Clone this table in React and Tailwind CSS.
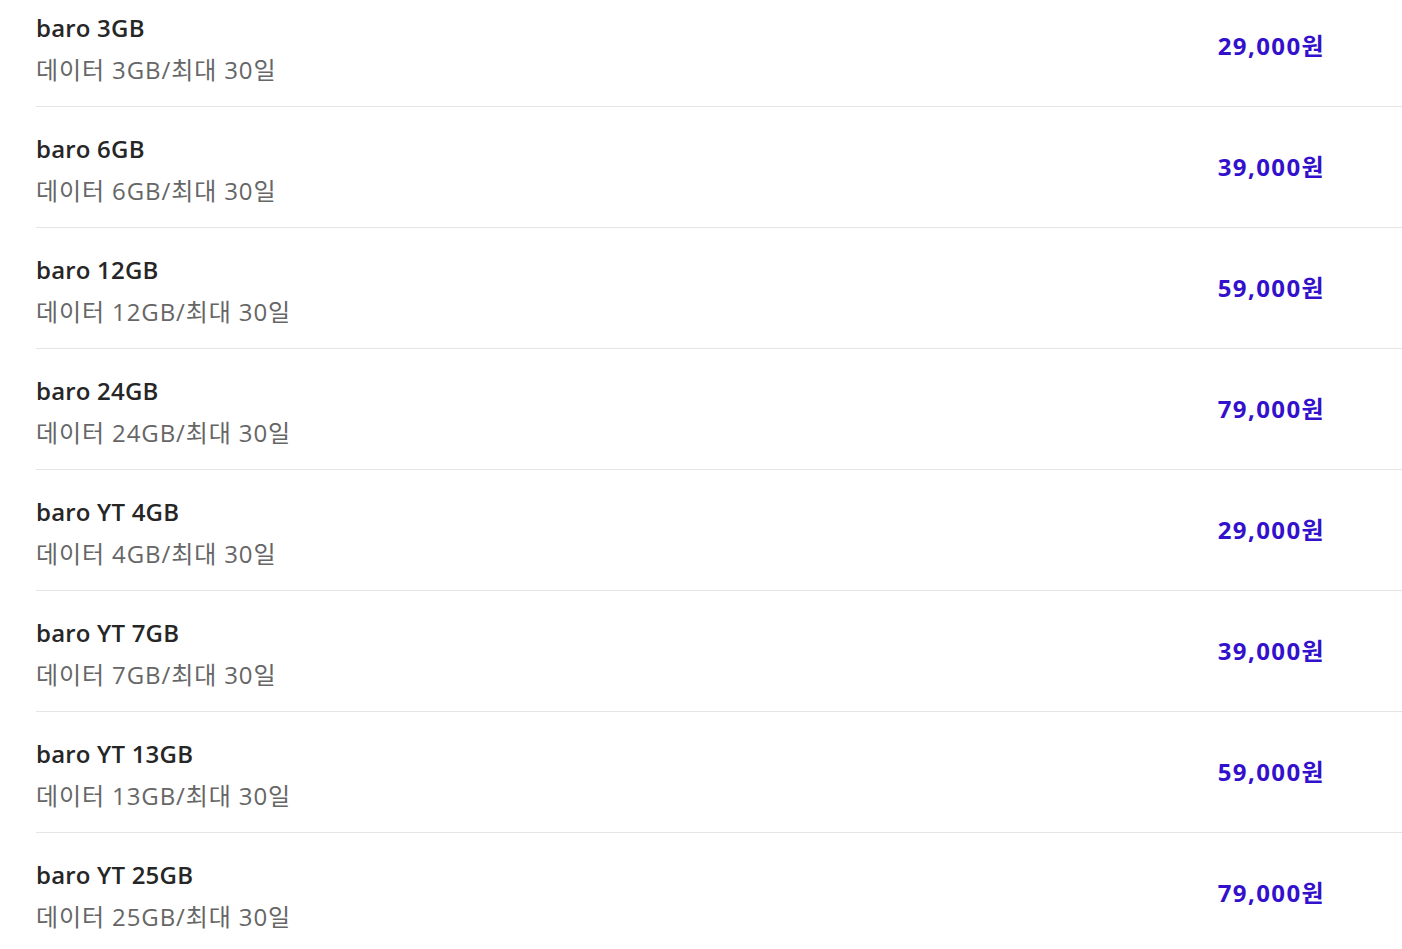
const plans = [
  { name: 'baro 3GB', desc: '데이터 3GB/최대 30일', price: '29,000원' },
  { name: 'baro 6GB', desc: '데이터 6GB/최대 30일', price: '39,000원' },
  { name: 'baro 12GB', desc: '데이터 12GB/최대 30일', price: '59,000원' },
  { name: 'baro 24GB', desc: '데이터 24GB/최대 30일', price: '79,000원' },
  { name: 'baro YT 4GB', desc: '데이터 4GB/최대 30일', price: '29,000원' },
  { name: 'baro YT 7GB', desc: '데이터 7GB/최대 30일', price: '39,000원' },
  { name: 'baro YT 13GB', desc: '데이터 13GB/최대 30일', price: '59,000원' },
  { name: 'baro YT 25GB', desc: '데이터 25GB/최대 30일', price: '79,000원' },
];

export default function App() {
  return (
    <div
      className="h-[949px] overflow-hidden bg-white"
      style={{ fontFamily: '"Open Sans", "Noto Sans CJK KR", sans-serif' }}
    >
      <ul className="-mt-[14px] pl-[36px]">
        {plans.map((p) => (
          <li
            key={p.name}
            className="flex h-[121px] items-center justify-between border-b border-[#e5e5e5] pr-[77px]"
          >
            {/* 요금제 이름/설명 */}
            <div className="flex flex-col pt-[6px]">
              <span className="text-[24px] font-semibold leading-[36px] tracking-[0.2px] text-[#262626]">
                {p.name}
              </span>
              <span className="mt-[6px] text-[24px] leading-[36px] tracking-[0.9px] text-[#666]">
                {p.desc}
              </span>
            </div>
            <span className="text-[24px] font-bold leading-[36px] tracking-[1.4px] text-[#3311cc]">
              {p.price}
            </span>
          </li>
        ))}
      </ul>
    </div>
  );
}
